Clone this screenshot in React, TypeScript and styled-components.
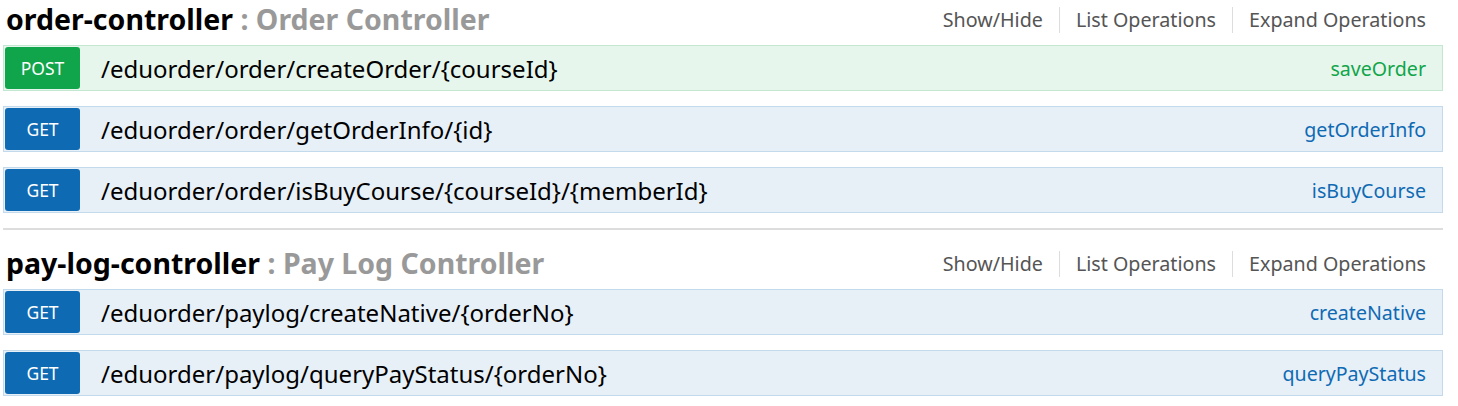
import React from "react";
import styled, { createGlobalStyle } from "styled-components";

const GlobalStyle = createGlobalStyle`
  body {
    margin: 0;
    background: #fff;
    font-family: "Noto Sans", "Open Sans", sans-serif;
  }
`;

const Page = styled.div`
  padding: 0 15px 0 3px;
`;

const Resource = styled.section<{ last?: boolean }>`
  padding-bottom: ${({ last }) => (last ? "0" : "15px")};
  margin-bottom: ${({ last }) => (last ? "0" : "14px")};
  border-bottom: ${({ last }) => (last ? "none" : "2px solid #ddd")};
`;

const Heading = styled.div`
  display: flex;
  justify-content: space-between;
  align-items: flex-start;
  height: 45px;
  padding-left: 3px;
`;

const Title = styled.h2`
  margin: 0;
  font-size: 28.5px;
  font-weight: 700;
  color: #000;
  line-height: 39px;
`;

const Description = styled.span`
  color: #999;
`;

const Links = styled.ul`
  display: flex;
  list-style: none;
  margin: 7px 0 0;
  padding: 0 17px 0 0;
`;

const LinkItem = styled.li<{ last?: boolean }>`
  font-size: 19.7px;
  color: #555;
  padding: 0 16px;
  line-height: 26px;
  border-right: ${({ last }) => (last ? "none" : "1px solid #ddd")};
  &:last-child {
    padding-right: 0;
  }
`;

const Operations = styled.ul`
  list-style: none;
  margin: 0;
  padding: 0;
  display: flex;
  flex-direction: column;
  gap: 15px;
`;

const methodColors = {
  POST: { badge: "#10a54a", bg: "#e7f6ec", border: "#c3e8d1", text: "#10a54a" },
  GET: { badge: "#0f6ab4", bg: "#e7f0f7", border: "#c3d9ec", text: "#0f6ab4" },
};

type Method = keyof typeof methodColors;

const OperationRow = styled.li<{ method: Method }>`
  display: flex;
  align-items: center;
  box-sizing: border-box;
  height: 46px;
  padding: 1px;
  background: ${({ method }) => methodColors[method].bg};
  border: 1px solid ${({ method }) => methodColors[method].border};
`;

const MethodBadge = styled.span<{ method: Method }>`
  display: flex;
  align-items: center;
  justify-content: center;
  width: 75px;
  height: 42px;
  border-radius: 3px;
  background: ${({ method }) => methodColors[method].badge};
  color: #fff;
  font-size: 17.5px;
  flex-shrink: 0;
`;

const Path = styled.span`
  margin-left: 21px;
  font-size: 24px;
  color: #000;
  flex: 1;
`;

const Nickname = styled.span<{ method: Method }>`
  font-size: 19.6px;
  color: ${({ method }) => methodColors[method].text};
  padding-right: 15px;
`;

type Op = { method: Method; path: string; name: string };

const resources: { name: string; description: string; ops: Op[] }[] = [
  {
    name: "order-controller",
    description: "Order Controller",
    ops: [
      { method: "POST", path: "/eduorder/order/createOrder/{courseId}", name: "saveOrder" },
      { method: "GET", path: "/eduorder/order/getOrderInfo/{id}", name: "getOrderInfo" },
      { method: "GET", path: "/eduorder/order/isBuyCourse/{courseId}/{memberId}", name: "isBuyCourse" },
    ],
  },
  {
    name: "pay-log-controller",
    description: "Pay Log Controller",
    ops: [
      { method: "GET", path: "/eduorder/paylog/createNative/{orderNo}", name: "createNative" },
      { method: "GET", path: "/eduorder/paylog/queryPayStatus/{orderNo}", name: "queryPayStatus" },
    ],
  },
];

export default function App() {
  return (
    <Page>
      <GlobalStyle />
      {resources.map((r, i) => (
        <Resource key={r.name} last={i === resources.length - 1}>
          <Heading>
            <Title>
              {r.name} <Description>: {r.description}</Description>
            </Title>
            <Links>
              <LinkItem>Show/Hide</LinkItem>
              <LinkItem>List Operations</LinkItem>
              <LinkItem last>Expand Operations</LinkItem>
            </Links>
          </Heading>
          <Operations>
            {r.ops.map((op) => (
              <OperationRow key={op.path} method={op.method}>
                <MethodBadge method={op.method}>{op.method}</MethodBadge>
                <Path>{op.path}</Path>
                <Nickname method={op.method}>{op.name}</Nickname>
              </OperationRow>
            ))}
          </Operations>
        </Resource>
      ))}
    </Page>
  );
}
